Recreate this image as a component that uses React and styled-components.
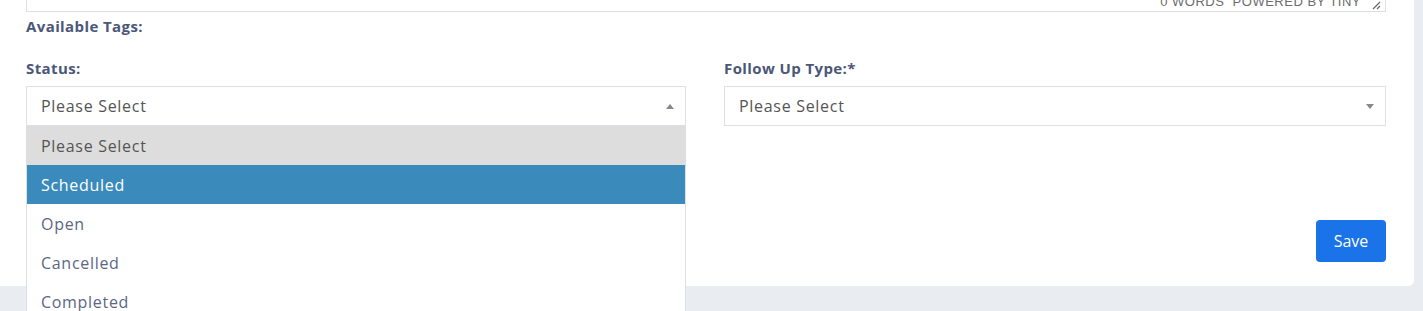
import React from "react";
import styled, { createGlobalStyle } from "styled-components";

const GlobalStyle = createGlobalStyle`
  html, body {
    margin: 0;
    padding: 0;
    overflow: hidden;
    background: #e9ecf1;
    font-family: "Open Sans", "Liberation Sans", sans-serif;
  }
`;

const Page = styled.div`
  width: 1423px;
  height: 311px;
  background: #e9ecf1;
  overflow: hidden;
`;

const Card = styled.div`
  width: 1414px;
  box-sizing: border-box;
  background: #fff;
  padding: 0 28px 24px 26px;
  border-bottom-right-radius: 6px;
`;

const EditorStatus = styled.div`
  height: 11px;
  border: 1px solid #dcdfe6;
  border-top: none;
  display: flex;
  justify-content: flex-end;
  align-items: flex-end;
  gap: 10px;
  padding-right: 4px;
  overflow: hidden;
  color: #6d6d6d;
  font-family: "Liberation Sans", Arial, sans-serif;
  font-size: 13px;
  letter-spacing: 0.5px;
`;

const StatusText = styled.span`
  line-height: 13px;
  margin-bottom: 3px;
  white-space: pre;
`;

const Grip = styled.svg`
  width: 10px;
  height: 10px;
  margin-bottom: 1px;
`;

const Label = styled.div`
  font-size: 15px;
  font-weight: 700;
  letter-spacing: 0.4px;
  color: #4b5779;
  line-height: 20px;
  margin-top: ${(p) => p.$top || 0}px;
`;

const Row = styled.div`
  display: grid;
  grid-template-columns: 660px 1fr;
  column-gap: 38px;
  margin-top: 22px;
`;

const Field = styled.div`
  display: flex;
  flex-direction: column;
  gap: 8px;
  position: relative;
`;

const Select = styled.div`
  height: 40px;
  box-sizing: border-box;
  border: 1px solid #dcdfe6;
  display: flex;
  align-items: center;
  justify-content: space-between;
  padding: 0 11px 0 14px;
  font-size: 16px;
  letter-spacing: 0.7px;
  color: #555;
  background: #fff;
`;

const Caret = styled.span`
  width: 0;
  height: 0;
  border-left: 4.5px solid transparent;
  border-right: 4.5px solid transparent;
  ${(p) =>
    p.$up ? "border-bottom: 5px solid #888;" : "border-top: 5px solid #888;"}
`;

const Menu = styled.ul`
  position: absolute;
  top: 68px;
  left: 0;
  width: 660px;
  box-sizing: border-box;
  margin: 0;
  padding: 0;
  list-style: none;
  background: #fff;
  border: 1px solid #dcdfe6;
  border-top: none;
  z-index: 2;
`;

const Option = styled.li`
  height: 39px;
  display: flex;
  align-items: center;
  padding-left: 14px;
  font-size: 16px;
  letter-spacing: 0.7px;
  color: ${(p) => (p.$active ? "#fff" : p.$muted ? "#555" : "#5b6684")};
  background: ${(p) => (p.$active ? "#3a8bbb" : p.$muted ? "#dddddd" : "#fff")};
`;

const Actions = styled.div`
  display: flex;
  justify-content: flex-end;
  margin-top: 94px;
`;

const SaveButton = styled.button`
  width: 70px;
  height: 42px;
  border: none;
  border-radius: 4px;
  background: #1a73e8;
  color: #fff;
  font-family: inherit;
  font-size: 16px;
`;

const options = ["Please Select", "Scheduled", "Open", "Cancelled", "Completed"];

const App = () => {
  return (
    <Page>
      <GlobalStyle />
      <Card>
        <EditorStatus>
          <StatusText>0 WORDS  POWERED BY TINY</StatusText>
          <Grip viewBox="0 0 10 10">
            <path d="M9 2 L2 9 M9 6 L6 9" stroke="#666" strokeWidth="1.2" fill="none" />
          </Grip>
        </EditorStatus>
        <Label $top={4}>Available Tags:</Label>
        <Row>
          <Field>
            <Label>Status:</Label>
            <Select>
              Please Select
              <Caret $up />
            </Select>
            <Menu>
              {options.map((o, i) => (
                <Option key={o} $muted={i === 0} $active={i === 1}>
                  {o}
                </Option>
              ))}
            </Menu>
          </Field>
          <Field>
            <Label>Follow Up Type:*</Label>
            <Select>
              Please Select
              <Caret />
            </Select>
          </Field>
        </Row>
        <Actions>
          <SaveButton>Save</SaveButton>
        </Actions>
      </Card>
    </Page>
  );
};

export default App;
